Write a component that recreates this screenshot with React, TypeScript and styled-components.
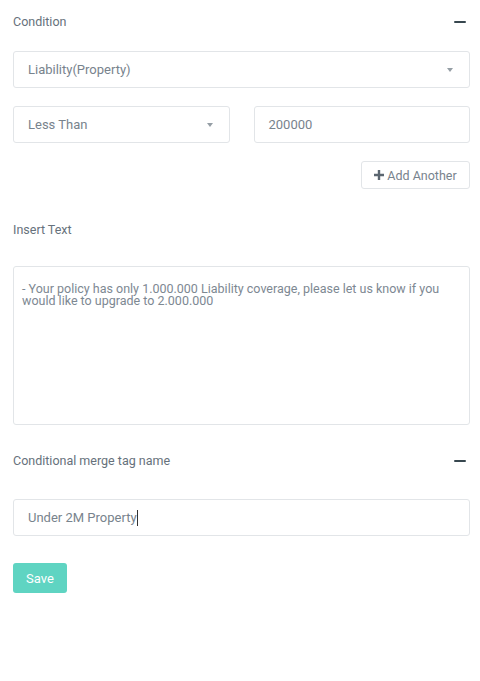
import React from "react"
import styled, { createGlobalStyle } from "styled-components"

const GlobalStyle = createGlobalStyle`
  body {
    margin: 0;
    background: #ffffff;
    font-family: Roboto, "Liberation Sans", Arial, sans-serif;
  }
`

const Form = styled.div`
  display: flex;
  flex-direction: column;
  padding: 14px 10px 0 13px;
  width: 480px;
  box-sizing: border-box;
`

const SectionHeader = styled.div<{ $mt?: number }>`
  display: flex;
  align-items: center;
  justify-content: space-between;
  height: 16px;
  margin-top: ${({ $mt }) => $mt || 0}px;
  padding-right: 4px;
`

const Label = styled.span`
  font-size: 12.5px;
  color: #66717b;
  line-height: 16px;
`

const Collapse = styled.span`
  display: block;
  width: 12px;
  height: 2px;
  background: #37474f;
  border-radius: 1px;
`

const Field = styled.div<{ $mt: number }>`
  display: flex;
  align-items: center;
  height: 37px;
  margin-top: ${({ $mt }) => $mt}px;
  box-sizing: border-box;
  border: 1px solid #e2e5e8;
  border-radius: 3px;
  padding: 0 16px 0 14px;
  font-size: 13px;
  color: #78838d;
  background: #fff;
`

const Caret = styled.span`
  margin-left: auto;
  width: 0;
  height: 0;
  border-left: 3.5px solid transparent;
  border-right: 3.5px solid transparent;
  border-top: 4px solid #959ea5;
`

const TextCursor = styled.span`
  display: inline-block;
  width: 1px;
  height: 16px;
  background: #333;
`

const Row = styled.div`
  display: grid;
  grid-template-columns: 1fr 1fr;
  gap: 24px;
  margin-top: 18px;
`

const Actions = styled.div`
  display: flex;
  justify-content: flex-end;
  margin-top: 18px;
`

const GhostButton = styled.button`
  display: flex;
  align-items: center;
  justify-content: center;
  gap: 3px;
  height: 28px;
  width: 109px;
  border: 1px solid #e2e5e8;
  border-radius: 3px;
  background: #fff;
  font-family: inherit;
  font-size: 12.5px;
  color: #78838d;
  padding: 0;
`

const PlusIcon = styled.svg`
  width: 10px;
  height: 10px;
  fill: #5b6670;
`

const TextArea = styled.textarea`
  margin-top: 28px;
  height: 159px;
  box-sizing: border-box;
  border: 1px solid #e2e5e8;
  border-radius: 3px;
  padding: 16px 8px;
  font-family: inherit;
  font-size: 12.5px;
  line-height: 12px;
  color: #7d8892;
  resize: none;
  outline: none;
`

const SaveButton = styled.button`
  align-self: flex-start;
  margin-top: 27px;
  width: 54px;
  height: 30px;
  border: none;
  border-radius: 3px;
  background: #5fd4c2;
  color: #fff;
  font-family: inherit;
  font-size: 13px;
  padding: 0;
`

const App = () => {
  return (
    <>
      <GlobalStyle />
      <Form>
        <SectionHeader>
          <Label>Condition</Label>
          <Collapse />
        </SectionHeader>
        <Field $mt={21}>
          Liability(Property)
          <Caret />
        </Field>
        <Row>
          <Field $mt={0}>
            Less Than
            <Caret />
          </Field>
          <Field $mt={0}>200000</Field>
        </Row>
        <Actions>
          <GhostButton type="button">
            <PlusIcon viewBox="0 0 10 10">
              <path d="M3.8 0h2.4v3.8H10v2.4H6.2V10H3.8V6.2H0V3.8h3.8z" />
            </PlusIcon>
            Add Another
          </GhostButton>
        </Actions>
        <SectionHeader $mt={33}>
          <Label>Insert Text</Label>
        </SectionHeader>
        <TextArea
          readOnly
          defaultValue="- Your policy has only 1.000.000 Liability coverage, please let us know if you would like to upgrade to 2.000.000"
        />
        <SectionHeader $mt={28}>
          <Label>Conditional merge tag name</Label>
          <Collapse />
        </SectionHeader>
        <Field $mt={30}>
          Under 2M Property
          <TextCursor />
        </Field>
        <SaveButton type="button">Save</SaveButton>
      </Form>
    </>
  )
}

export default App
